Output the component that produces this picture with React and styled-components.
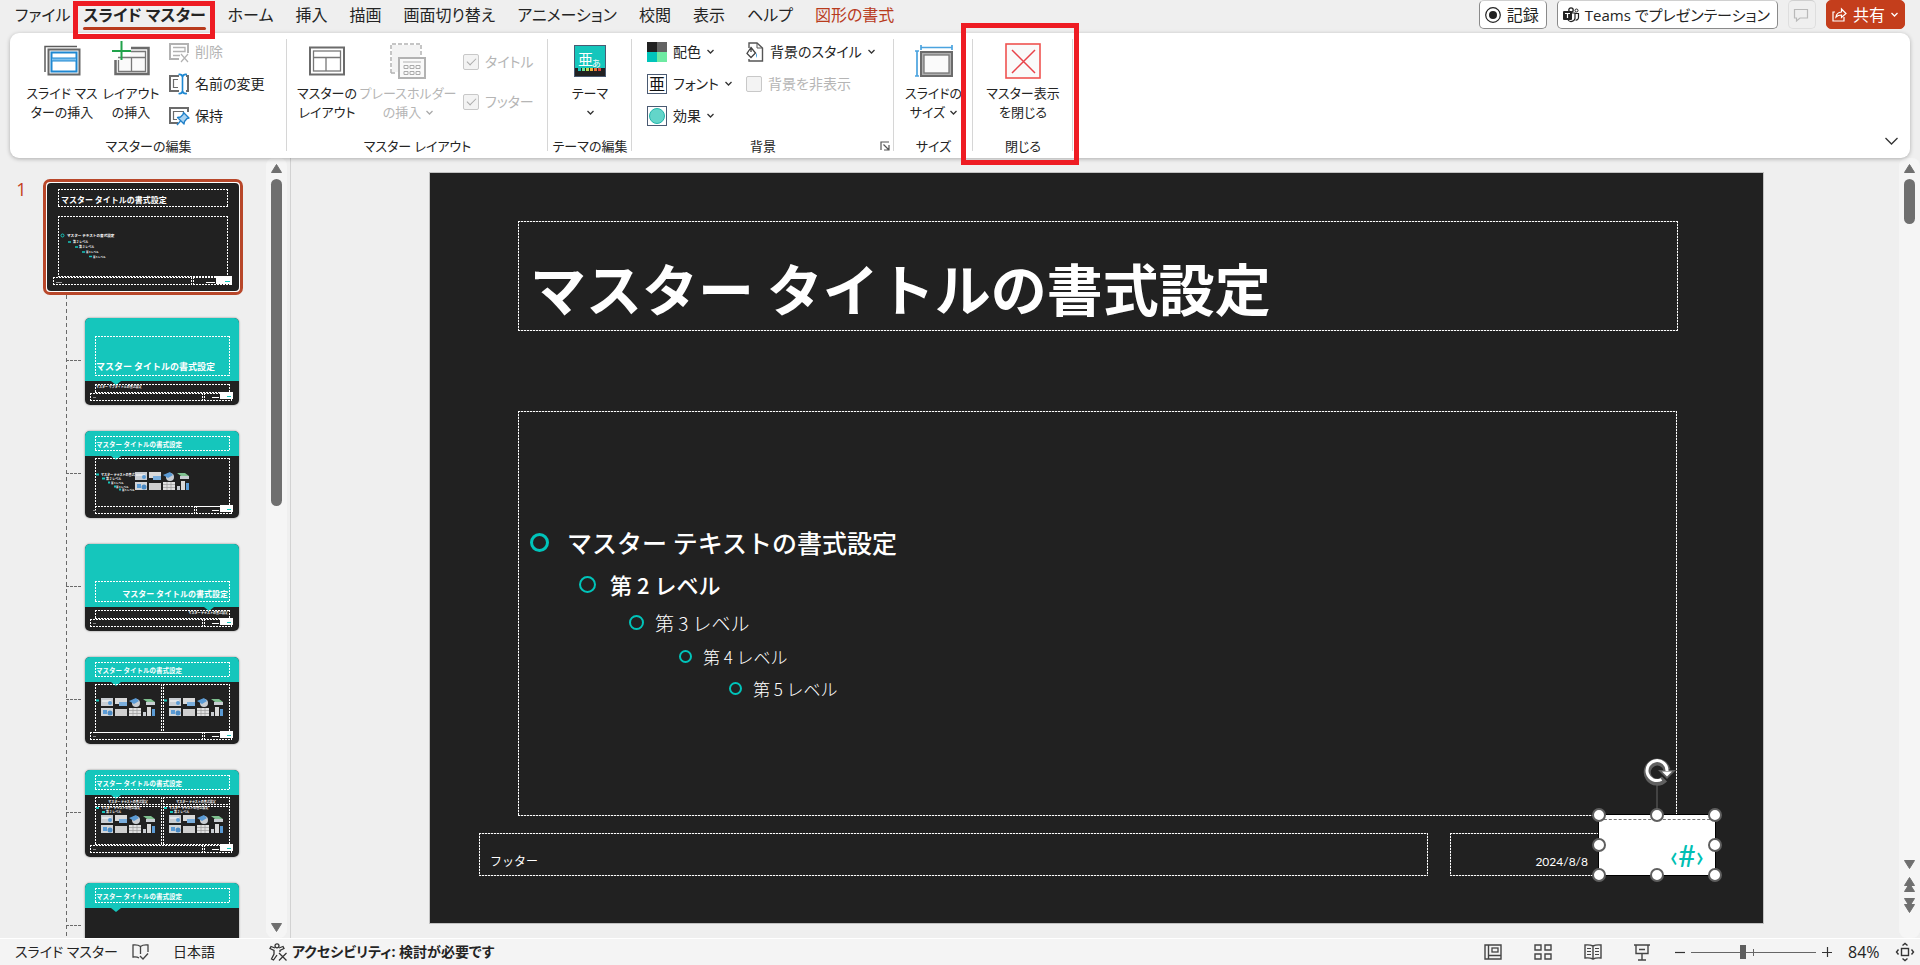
import React from "react";
import styled, { createGlobalStyle, css } from "styled-components";

const TEAL = "#15c6bc";
const DARK = "#212121";
const ACCENT = "#c43e1c";
const MARK = "#ee1c23";

const GlobalStyle = createGlobalStyle`
  * { box-sizing: border-box; }
  body {
    margin: 0;
    background: #efefef;
    color: #242424;
    font-family: "Open Sans", "Noto Sans CJK JP", sans-serif;
    font-feature-settings: "palt";
    font-size: 14px;
  }
  button, input { font: inherit; font-feature-settings: inherit; color: inherit; }
  button { background: none; border: 0; padding: 0; margin: 0; }
  ul { list-style: none; margin: 0; padding: 0; }
  svg { display: block; flex: none; overflow: visible; }
`;

const Window = styled.div`
  height: 100vh;
  display: flex;
  flex-direction: column;
  overflow: hidden;
`;

/* ---------- tab strip ---------- */

const TabBar = styled.header`
  height: 33px;
  flex: none;
  display: flex;
  align-items: flex-start;
  justify-content: space-between;
  padding: 0 15px 0 4px;
`;

const Tabs = styled.nav`
  display: flex;
`;

const Tab = styled.button`
  position: relative;
  height: 30px;
  padding: 0 11px;
  font-size: 16px;
  line-height: 30px;
  white-space: nowrap;
  color: ${(p) => (p.$accent ? "#b83b1d" : "inherit")};
  &:first-child { padding-right: 2px; }
  ${(p) =>
    p.$active &&
    css`
      font-weight: 700;
      &::before {
        content: "";
        position: absolute;
        left: 11px;
        right: 11px;
        bottom: 0;
        height: 3px;
        border-radius: 2px;
        background: #b83b1d;
      }
      &::after {
        content: "";
        position: absolute;
        z-index: 2;
        inset: 1px 2px -9px 1px;
        border: 5px solid ${MARK};
      }
    `}
`;

const Actions = styled.div`
  display: flex;
  gap: 10px;
`;

const Action = styled.button`
  height: 29px;
  display: flex;
  align-items: center;
  gap: 6px;
  padding: 0 7px 0 5px;
  border: 1px solid ${(p) => (p.$faint ? "#dedede" : "#8a8a8a")};
  border-top-color: #d0d0d0;
  border-radius: 5px;
  background: ${(p) => (p.$faint ? "transparent" : "#fff")};
  font-size: ${(p) => (p.$compact ? 15 : 16)}px;
  line-height: 26px;
  white-space: nowrap;
  ${(p) =>
    p.$primary &&
    css`
      background: ${ACCENT};
      border-color: ${ACCENT};
      color: #fff;
      padding: 0 6px 0 5px;
    `}
`;

/* ---------- ribbon ---------- */

const Ribbon = styled.section`
  position: relative;
  z-index: 1;
  height: 125px;
  flex: none;
  margin: 0 10px;
  padding-top: 6px;
  display: flex;
  background: #fff;
  border-radius: 9px;
  box-shadow: 0 1px 4px rgba(0, 0, 0, 0.28);
`;

const GroupBox = styled.div`
  position: relative;
  flex: none;
  width: ${(p) => p.$width}px;
  display: flex;
  flex-direction: column;
  &::after {
    content: "";
    position: absolute;
    right: 0;
    top: 0;
    height: 112px;
    border-right: 1px solid #d6d6d6;
  }
  ${(p) =>
    p.$marked &&
    css`
      &::before {
        content: "";
        position: absolute;
        z-index: 2;
        inset: -16px -6px -7px -12px;
        border: 5px solid ${MARK};
      }
    `}
`;

const GroupBody = styled.div`
  flex: 1;
  display: flex;
  align-items: flex-start;
  justify-content: ${(p) => (p.$center ? "center" : "flex-start")};
  padding-left: ${(p) => p.$indent || 0}px;
`;

const GroupLabel = styled.div`
  position: relative;
  height: 24px;
  line-height: 24px;
  font-size: 13px;
  text-align: center;
  white-space: nowrap;
`;

const Launcher = styled.button`
  position: absolute;
  right: 4px;
  top: 7px;
`;

const LargeButton = styled.button`
  width: ${(p) => p.$width}px;
  flex: none;
  display: flex;
  flex-direction: column;
  align-items: center;
  gap: 5px;
  padding-top: 4px;
  font-size: 13px;
  line-height: 19px;
  white-space: nowrap;
  color: ${(p) => (p.disabled ? "#b5b5b5" : "inherit")};
`;

const LabelLine = styled.span`
  display: flex;
  align-items: center;
  justify-content: center;
  gap: 5px;
  height: 19px;
`;

const SmallColumn = styled.div`
  display: flex;
  flex-direction: column;
  align-items: flex-start;
  gap: 10px;
  padding-top: 2px;
  margin-left: ${(p) => p.$gap || 0}px;
  width: ${(p) => (p.$width ? p.$width + "px" : "auto")};
`;

const SmallButton = styled.button`
  height: 22px;
  display: flex;
  align-items: center;
  gap: 6px;
  line-height: 22px;
  white-space: nowrap;
  color: ${(p) => (p.disabled ? "#b5b5b5" : "inherit")};
`;

const CheckColumn = styled.div`
  display: flex;
  flex-direction: column;
  gap: 18px;
  padding-top: 12px;
  margin-left: 5px;
`;

const CheckLabel = styled.label`
  height: 22px;
  display: flex;
  align-items: center;
  gap: 6px;
  line-height: 22px;
  white-space: nowrap;
  color: #b5b5b5;
`;

const Check = styled.input.attrs({ type: "checkbox" })`
  appearance: none;
  position: relative;
  width: 16px;
  height: 16px;
  margin: 0;
  border: 1px solid #c8c8c8;
  border-radius: 2px;
  background: #f3f3f3;
  &:checked::after {
    content: "";
    position: absolute;
    left: 3px;
    top: 3px;
    width: 8px;
    height: 4px;
    border: solid #ababab;
    border-width: 0 0 1px 1px;
    transform: rotate(-45deg);
  }
`;

const Collapse = styled.button`
  margin: 98px 12px auto auto;
`;

/* ---------- work area ---------- */

const Work = styled.main`
  flex: 1;
  min-height: 0;
  display: flex;
`;

const Panel = styled.aside`
  width: 291px;
  flex: none;
  display: flex;
  border-right: 1px solid #d2d2d2;
`;

const ThumbList = styled.div`
  flex: 1;
  overflow: hidden;
`;

const MasterRow = styled.div`
  display: flex;
  padding-top: 21px;
`;

const MasterNumber = styled.span`
  width: 43px;
  text-align: center;
  font-size: 18px;
  line-height: 20px;
  color: ${ACCENT};
`;

const MasterThumb = styled.button`
  border: 3px solid #b8472a;
  border-radius: 7px;
  padding: 1px;
  background: #fff;
  overflow: hidden;
  svg { border-radius: 4px; overflow: hidden; }
`;

const LayoutList = styled.ul`
  margin-left: 66px;
  background: repeating-linear-gradient(#6a6a6a 0 4px, transparent 4px 7px) 0 0 / 1px 100% no-repeat;
`;

const LayoutItem = styled.li`
  position: relative;
  height: 113px;
  padding: 23px 0 0 19px;
  &::before {
    content: "";
    position: absolute;
    left: 0;
    top: 65px;
    width: 15px;
    border-top: 1px dashed #6a6a6a;
  }
`;

const LayoutThumb = styled.button`
  display: block;
  border-radius: 5px;
  overflow: hidden;
  box-shadow: 0 0 2px rgba(0, 0, 0, 0.5);
  svg { overflow: hidden; }
`;

const ScrollTrack = styled.div`
  width: 21px;
  flex: none;
  display: flex;
  flex-direction: column;
  align-items: center;
  gap: 6px;
  padding-top: 6px;
  background: #f5f5f5;
  border-radius: 8px;
  margin-right: ${(p) => p.$edge || 0}px;
`;

const ScrollThumb = styled.div`
  width: 11px;
  height: ${(p) => p.$size}px;
  border-radius: 6px;
  background: #6f6f6f;
  margin-bottom: auto;
`;

const ScrollButton = styled.button`
  padding-bottom: ${(p) => (p.$end ? 6 : 0)}px;
`;

const Stage = styled.section`
  flex: 1;
  min-width: 0;
  display: flex;
  padding: 14px 135px 14px 138px;
`;

const Slide = styled.article`
  flex: 1;
  display: flex;
  flex-direction: column;
  padding: 48px 48px 47px 49px;
  background: ${DARK};
  border: 1px solid #c2c2c2;
  color: #fff;
  font-family: "Noto Sans CJK JP", sans-serif;
  font-feature-settings: normal;
`;

const dotted = css`
  --h: repeating-linear-gradient(90deg, #fff 0 2px, #555 2px 3px);
  --v: repeating-linear-gradient(#fff 0 2px, #555 2px 3px);
  background:
    var(--h) 0 0 / 100% 1px no-repeat,
    var(--h) 0 100% / 100% 1px no-repeat,
    var(--v) 0 0 / 1px 100% no-repeat,
    var(--v) 100% 0 / 1px 100% no-repeat;
`;

const TitleHolder = styled.h1`
  ${dotted}
  height: 110px;
  margin: 0 37px 80px 39px;
  padding: 0 12px 8px;
  display: flex;
  align-items: flex-end;
  font-size: 56px;
  line-height: 72px;
  font-weight: 700;
  white-space: nowrap;
`;

const BodyHolder = styled.div`
  ${dotted}
  flex: 1;
  margin: 0 38px 17px 39px;
  padding: 109px 12px 0;
`;

const LEVELS = [
  { indent: 0, size: 25, height: 44, ring: 19, gap: 18, weight: 500, text: "マスター テキストの書式設定" },
  { indent: 49, size: 22, height: 40, ring: 17, gap: 14, weight: 500, text: "第 2 レベル" },
  { indent: 99, size: 19, height: 36, ring: 15, gap: 11, weight: 300, text: "第 3 レベル" },
  { indent: 149, size: 17, height: 32, ring: 13, gap: 11, weight: 300, text: "第 4 レベル" },
  { indent: 199, size: 17, height: 32, ring: 13, gap: 11, weight: 300, text: "第 5 レベル" },
];

const Level = styled.li`
  display: flex;
  align-items: center;
  gap: ${(p) => p.$gap}px;
  height: ${(p) => p.$height}px;
  margin-left: ${(p) => p.$indent}px;
  font-size: ${(p) => p.$size}px;
  font-weight: ${(p) => p.$weight};
  white-space: nowrap;
`;

const Ring = styled.span`
  width: ${(p) => p.$size}px;
  height: ${(p) => p.$size}px;
  border: ${(p) => (p.$size > 17 ? 3 : 2)}px solid #00c4ba;
  border-radius: 50%;
`;

const FooterRow = styled.div`
  position: relative;
  height: 43px;
  display: flex;
  gap: 22px;
`;

const FooterHolder = styled.div`
  ${dotted}
  flex: 1;
  padding: 16px 11px 0;
  font-size: 12px;
  line-height: 24px;
`;

const DateHolder = styled.div`
  ${dotted}
  width: 265px;
  padding: 17px 127px 0 0;
  font-family: Lato, sans-serif;
  font-size: 12px;
  line-height: 24px;
  text-align: right;
`;

const NumberBox = styled.div`
  position: absolute;
  right: -1px;
  bottom: 0;
  width: 118px;
  height: 62px;
  background: #fff;
  border: 1px solid #000;
  color: #00bfb3;
  font-family: Lato, sans-serif;
  font-size: 30px;
  line-height: 32px;
  text-align: right;
  padding: 24px 11px 0 0;
  &::before {
    content: "";
    position: absolute;
    left: 0;
    right: 0;
    top: 4px;
    border-top: 1px dashed #777;
  }
`;

const Handle = styled.span`
  position: absolute;
  width: 14px;
  height: 14px;
  left: ${(p) => p.$x}%;
  top: ${(p) => p.$y}%;
  margin: -7px 0 0 -7px;
  border: 2px solid #5f5f5f;
  border-radius: 50%;
  background: #fff;
`;

const Rotator = styled.span`
  position: absolute;
  left: 45px;
  top: -58px;
`;

/* ---------- status bar ---------- */

const StatusBar = styled.footer`
  height: 27px;
  flex: none;
  display: flex;
  align-items: center;
  border-top: 1px solid #fff;
  background: #f4f4f4;
  padding: 0 6px 0 15px;
  line-height: 26px;
  white-space: nowrap;
`;

const StatusItem = styled.button`
  display: flex;
  align-items: center;
  gap: 5px;
  margin-right: ${(p) => p.$after || 0}px;
  font-weight: ${(p) => (p.$strong ? 700 : 400)};
`;

const StatusRight = styled.div`
  margin-left: auto;
  display: flex;
  align-items: center;
`;

const ZoomTrack = styled.label`
  position: relative;
  display: flex;
  margin: 0 6px;
  &::after {
    content: "";
    position: absolute;
    left: 62px;
    top: 4px;
    height: 7px;
    border-left: 1px solid #666;
  }
`;

const ZoomRange = styled.input.attrs({ type: "range" })`
  appearance: none;
  width: 125px;
  height: 15px;
  margin: 0;
  background: linear-gradient(#666, #666) 0 50% / 100% 1px no-repeat;
  &::-webkit-slider-thumb {
    appearance: none;
    width: 6px;
    height: 14px;
    background: #5e5e5e;
  }
`;

const ZoomValue = styled.button`
  width: 34px;
  margin: 0 14px 0 16px;
  font-size: 16px;
  text-align: left;
`;

/* ---------- icons ---------- */

const Svg = ({ w, h = w, children, ...rest }) => (
  <svg width={w} height={h} viewBox={`0 0 ${w} ${h}`} fill="none" aria-hidden="true" {...rest}>
    {children}
  </svg>
);

const Chevron = ({ w = 7, color = "#333" }) => (
  <Svg w={w} h={w / 2 + 2}>
    <path d={`M0.5 1 L${w / 2} ${w / 2 + 0.5} L${w - 0.5} 1`} stroke={color} strokeWidth="1.3" />
  </Svg>
);

const InsertMasterIcon = () => (
  <Svg w={36}>
    <path d="M1 29V3.5H33" stroke="#5c5c5c" strokeWidth="1.5" />
    <rect x="4.5" y="6.5" width="31" height="25" stroke="#666" strokeWidth="2" fill="#fafafa" />
    <rect x="7.5" y="9.5" width="25" height="19" stroke="#1e88d2" strokeWidth="2" fill="#fff" />
    <rect x="7.5" y="15" width="25" height="3" fill="#7cc0ee" stroke="#1e88d2" />
  </Svg>
);

const InsertLayoutIcon = () => (
  <Svg w={38} h={36}>
    <path d="M19 5H36.5V31H3.5V17" stroke="#6b6b6b" strokeWidth="2.5" fill="#fafafa" />
    <path d="M19 8.5H33.5V28.5H6.5V17M19 14.5H33M6 14.5H33M19.5 14.5V28" stroke="#777" strokeWidth="1.3" />
    <rect x="0" y="0" width="18" height="13" fill="#fff" />
    <path d="M9.5 -2V17M0 8H19" stroke="#21a24b" strokeWidth="2" />
  </Svg>
);

const LayoutIcon = () => (
  <Svg w={36}>
    <rect x="1" y="4.5" width="34" height="27" stroke="#6b6b6b" strokeWidth="2" fill="#fff" />
    <rect x="4.5" y="8" width="27" height="20" stroke="#777" strokeWidth="1.3" />
    <path d="M4.5 14.5H31.5M17 14.5V28" stroke="#777" strokeWidth="1.3" />
  </Svg>
);

const PlaceholderIcon = () => (
  <Svg w={36}>
    <path d="M1 30V1H31V13M1 30H7" stroke="#b2b2b2" strokeWidth="1.5" strokeDasharray="4 2" />
    <path d="M2 2H30V14H8V29H2Z" fill="#f3f3f3" />
    <rect x="9" y="15" width="26" height="20" stroke="#b2b2b2" strokeWidth="2" fill="#fafafa" />
    <path d="M13 19H31" stroke="#b2b2b2" />
    <path d="M14 22.5h4v3h-4zM20 22.5h4v3h-4zM26 22.5h4v3h-4zM14 28.5h4v3h-4zM20 28.5h4v3h-4zM26 28.5h4v3h-4z" stroke="#aaa" />
  </Svg>
);

const DeleteIcon = () => (
  <Svg w={20}>
    <path d="M10 17H1V2H19V11" stroke="#b2b2b2" strokeWidth="2" />
    <path d="M4 5.5H16V9.5H4M4 13.5H11" stroke="#b2b2b2" strokeWidth="1.3" />
    <path d="M12 12L19 20M19 12L12 20" stroke="#b2b2b2" strokeWidth="1.2" />
  </Svg>
);

const RenameIcon = () => (
  <Svg w={20}>
    <path d="M10 2H1V17H10M17 2H19V17H17" stroke="#6b6b6b" strokeWidth="2" />
    <path d="M9 5.5H4.5V13.5H9" stroke="#6b6b6b" strokeWidth="1.2" />
    <path d="M9.5 0.5Q13 0 13.5 3Q14 0 18 0.5M13.5 2V18M9.5 19.5Q13 20 13.5 17Q14 20 18 19.5" stroke="#1e88d2" strokeWidth="1.6" />
  </Svg>
);

const PreserveIcon = () => (
  <Svg w={20}>
    <path d="M9 17H1V2H19V6" stroke="#6b6b6b" strokeWidth="2" />
    <path d="M8 13.5H4.5V5.5H15" stroke="#6b6b6b" strokeWidth="1.2" />
    <path d="M14.5 6.5L20 12L18 12.5L15.5 15.5L15 18L8.5 11.5L11.5 11L14 8.5Z" stroke="#1e7fc8" strokeWidth="1.3" fill="#a9d3f2" strokeLinejoin="round" />
    <path d="M11.5 15L8 19" stroke="#1e7fc8" strokeWidth="1.4" />
  </Svg>
);

const ThemeIcon = () => (
  <Svg w={32} h={36}>
    <rect x="0.5" y="2.5" width="31" height="31" fill={TEAL} stroke="#4a5a72" />
    <path d="M1 25H31V33H1Z" fill={DARK} />
    {["#15c6bc", "#6de89a", "#b9dd55", "#f0b43c", "#e8743c", "#d8433d"].map((c, i) => (
      <rect key={c} x={4 + i * 4} y="25" width="3" height="3" fill={c} />
    ))}
    <text x="4" y="22" fontSize="15" fill="#fff" fontFamily="Noto Sans CJK JP">亜</text>
    <text x="18" y="24" fontSize="9" fill="#fff" fontFamily="Noto Sans CJK JP">あ</text>
  </Svg>
);

const ColorsIcon = () => (
  <Svg w={20}>
    <path d="M0 0H10V10H0Z" fill="#212121" />
    <path d="M10 0H20V10H10Z" fill="#636363" />
    <path d="M0 10H10V20H0Z" fill="#00c4ba" />
    <path d="M10 10H20V20H10Z" fill="#6eeaa2" />
  </Svg>
);

const FontsIcon = () => (
  <Svg w={20}>
    <rect x="0.5" y="0.5" width="19" height="19" stroke="#4a5a72" fill="#fff" />
    <text x="2" y="16" fontSize="16" fill="#111" fontFamily="Noto Sans CJK JP">亜</text>
  </Svg>
);

const EffectsIcon = () => (
  <Svg w={20}>
    <rect x="0.5" y="0.5" width="19" height="19" stroke="#4a5a72" fill="#fff" />
    <circle cx="10" cy="10" r="7.5" fill="#63d5c9" stroke="#22b5ab" />
  </Svg>
);

const BackgroundIcon = () => (
  <Svg w={18} h={20}>
    <path d="M3 6V1H11L16.5 6V19H3V17" stroke="#555" strokeWidth="1.4" />
    <path d="M11 1V6H16" stroke="#555" />
    <path d="M5 5.5L9.5 11L5 15.5L1 11.5ZM5 5.5V10" stroke="#444" strokeWidth="1.3" fill="#fff" />
    <path d="M10 11Q12 13 10 16Z" fill="#3d9be0" />
  </Svg>
);

const SlideSizeIcon = () => (
  <Svg w={38} h={36}>
    <path d="M6 4.5H37M6 2V7M37 2V7M2 8V33M0 8H4M0 33H4" stroke="#4aa3df" strokeWidth="1.7" />
    <rect x="6" y="9" width="31" height="24" stroke="#6b6b6b" strokeWidth="2" fill="#b0b0b0" />
    <rect x="9" y="12" width="25" height="18" stroke="#777" strokeWidth="1.3" fill="#fafafa" />
  </Svg>
);

const CloseIcon = () => (
  <Svg w={36}>
    <rect x="1" y="1" width="34" height="34" stroke="#ef5350" strokeWidth="1.6" fill="#fafafa" />
    <path d="M7 7L30 30M30 7L7 30" stroke="#e8434a" strokeWidth="1.5" />
  </Svg>
);

const RecordIcon = () => (
  <Svg w={16}>
    <circle cx="8" cy="8" r="7.3" stroke="#222" strokeWidth="1.2" />
    <circle cx="8" cy="8" r="4" fill="#222" />
  </Svg>
);

const TeamsIcon = () => (
  <Svg w={16}>
    <circle cx="8" cy="3" r="2.2" stroke="#222" strokeWidth="1.3" />
    <circle cx="13.5" cy="3.5" r="1.5" stroke="#222" />
    <path d="M9 6H12V11.5A4 4 0 0 1 5 13M12 6.5H15.5V10.5A2.5 2.5 0 0 1 12.5 13" stroke="#222" strokeWidth="1.2" />
    <rect x="0" y="4" width="9" height="9" rx="1" fill="#222" />
    <path d="M2 6.5H7M4.5 6.5V11" stroke="#fff" strokeWidth="1.2" />
  </Svg>
);

const CommentIcon = () => (
  <Svg w={14}>
    <path d="M0.5 1.5H13.5V10H6L2.5 13V10H0.5Z" stroke="#b9b9b9" strokeWidth="1.2" />
  </Svg>
);

const ShareIcon = () => (
  <Svg w={15}>
    <path d="M3 5H1V14H12V10" stroke="#fff" strokeWidth="1.2" />
    <path d="M4 10Q4.5 5.5 9.5 5V2L14 6.5L9.5 10.5V8Q6 8 4 10Z" stroke="#fff" strokeWidth="1.2" />
  </Svg>
);

const LauncherIcon = () => (
  <Svg w={10}>
    <path d="M1 9V1H9M3.5 3.5L9 9M9 4V9H4" stroke="#555" strokeWidth="1.2" />
  </Svg>
);

const Triangle = ({ down, double: twice }) => {
  const one = down ? "M0.5 0.5H10.5L5.5 8.5Z" : "M0.5 8.5H10.5L5.5 0.5Z";
  return (
    <Svg w={11} h={twice ? 15 : 9}>
      <path d={one} fill="#6f6f6f" stroke="#6f6f6f" strokeLinejoin="round" />
      {twice && <path d={one} fill="#6f6f6f" stroke="#6f6f6f" strokeLinejoin="round" transform="translate(0 6)" />}
    </Svg>
  );
};

const RotateIcon = () => (
  <Svg w={30} h={52}>
    <path d="M13 27V52" stroke="#666" />
    <path d="M20.5 22A10 10 0 1 1 23 13" stroke="#606060" strokeWidth="7" />
    <path d="M14 13H32L23 22Z" fill="#606060" />
    <path d="M17.5 22.5A10 10 0 1 1 23 14" stroke="#fff" strokeWidth="3" />
    <path d="M18 14.5H28L23 19.5Z" fill="#fff" />
  </Svg>
);

const ProofIcon = () => (
  <Svg w={17} h={16}>
    <path d="M8.5 2.5Q6 0.5 1 1V13Q5 12.5 7 14M8.5 2.5Q11 0.5 16 1V8M8.5 2.5V10M8 12L11 15L16 9.5" stroke="#444" strokeWidth="1.3" />
  </Svg>
);

const AccessibilityIcon = () => (
  <Svg w={18}>
    <circle cx="8" cy="2.8" r="2" stroke="#333" strokeWidth="1.3" />
    <path d="M6 5L2 3.5L1 5.5L5 7.5V11L2.5 16L4.5 17L8 12M10 5L14 3.5L15 5.5L11 7.5V9" stroke="#333" strokeWidth="1.3" />
    <path d="M10 10L17.5 17.5M17.5 10L10 17.5" stroke="#333" strokeWidth="1.3" />
  </Svg>
);

const NormalViewIcon = () => (
  <Svg w={18} h={16}>
    <path d="M1 1H17V15H1ZM4.5 1V15M4.5 11.5H17" stroke="#444" strokeWidth="1.4" />
    <rect x="8" y="4" width="6" height="4" stroke="#444" strokeWidth="1.3" />
  </Svg>
);

const SorterIcon = () => (
  <Svg w={18} h={16}>
    <path d="M1 1H7V6H1ZM11 1H17V6H11ZM1 10H7V15H1ZM11 10H17V15H11Z" stroke="#444" strokeWidth="1.4" />
  </Svg>
);

const ReadingIcon = () => (
  <Svg w={18} h={16}>
    <path d="M9 2Q6 0.5 1 1V14Q6 13.5 9 15Q12 13.5 17 14V1Q12 0.5 9 2V15" stroke="#444" strokeWidth="1.4" />
    <path d="M3 4.5H7M3 7.5H7M3 10.5H7M11 4.5H15M11 7.5H15M11 10.5H15" stroke="#444" strokeWidth="1.2" />
  </Svg>
);

const ShowIcon = () => (
  <Svg w={16} h={17}>
    <path d="M0 1H16M2 1V9.5H14V1M5 5.5H11M8 9.5V16M4 16H12" stroke="#444" strokeWidth="1.4" />
  </Svg>
);

const FitIcon = () => (
  <Svg w={18}>
    <rect x="5.5" y="5.5" width="7" height="7" stroke="#333" strokeWidth="1.4" />
    <path d="M6.5 2.5L9 0.5L11.5 2.5M6.5 15.5L9 17.5L11.5 15.5M2.5 6.5L0.5 9L2.5 11.5M15.5 6.5L17.5 9L15.5 11.5" stroke="#333" strokeWidth="1.4" />
  </Svg>
);

const Sign = ({ plus }) => (
  <Svg w={10}>
    <path d={plus ? "M0 5.5H10M5.5 0V10" : "M0 5.5H10"} stroke="#333" strokeWidth="1.2" />
  </Svg>
);

/* ---------- slide miniatures ---------- */

const Dash = ({ x, y, w, h }) => (
  <path
    d={`M${x} ${y + 0.5}H${x + w + 1}M${x} ${y + h + 0.5}H${x + w + 1}M${x + 0.5} ${y}V${y + h + 1}M${x + w + 0.5} ${y}V${y + h + 1}`}
    stroke="#fff"
    strokeDasharray="2 1"
  />
);

const Words = ({ x, y, size, bold = true, anchor, children, fill = "#fff" }) => (
  <text x={x} y={y} fontSize={size} fontWeight={bold ? 700 : 400} textAnchor={anchor} fill={fill} fontFamily="Noto Sans CJK JP" style={{ fontFeatureSettings: "normal" }}>
    {children}
  </text>
);

const MiniFooter = ({ inset = 5, split = 117 }) => (
  <g>
    <Dash x={inset} y={75} w={split - inset} h={7} />
    <Dash x={split + 2} y={75} w={144 - split} h={7} />
    <rect x="135" y="74" width="13" height="7" fill="#fff" />
    <path d="M8 79.5H11" stroke="#888" />
    <path d="M127 79.5H134" stroke="#fff" />
    <path d="M142 78.5H146" stroke={TEAL} />
  </g>
);

const MiniIcons = ({ x, y }) => (
  <g transform={`translate(${x} ${y})`}>
    <rect width="12" height="8" fill="#c9cdd2" />
    <path d="M1 3H10" stroke="#fff" />
    <circle cx="9" cy="5" r="2" fill="#5b9bd5" />
    <rect x="14" width="12" height="6" fill="#d9d9d9" />
    <rect x="18" y="4" width="8" height="4" fill="#7aaedd" />
    <circle cx="35" cy="5" r="4" fill="#c9cdd2" />
    <path d="M28 3L35 0L38 3L33 6Z" fill="#5b9bd5" />
    <path d="M42 1H50L54 4H46Z" fill="#7fc08f" />
    <rect x="45" y="4" width="9" height="3" fill="#c9cdd2" />
    <rect y="10" width="12" height="8" fill="#d0d4d8" />
    <rect x="2" y="12" width="4" height="4" fill="#5b9bd5" />
    <circle cx="9" cy="15" r="2.5" fill="#4a8ac4" />
    <rect x="14" y="11" width="12" height="7" fill="#cfcfcf" />
    <rect x="28" y="10" width="12" height="8" fill="#e0e0e0" />
    <path d="M28 12.5H40M28 15.5H40M32 10V18M36 10V18" stroke="#999" strokeWidth="0.7" />
    <rect x="42" y="14" width="3" height="4" fill="#c9cdd2" />
    <rect x="46" y="9" width="4" height="9" fill="#d9d9d9" />
    <rect x="51" y="11" width="3" height="7" fill="#5b9bd5" />
  </g>
);

const TITLE = "マスター タイトルの書式設定";

const MiniLayout = ({ kind }) => {
  const tall = kind === "title" || kind === "section";
  const edge = tall ? 63 : 25;
  const notch = kind === "section" ? 124 : 31;
  return (
    <Svg w={154} h={87}>
      <rect width="154" height="87" fill={DARK} />
      <rect width="154" height={edge} fill={TEAL} />
      <path d={`M${notch - 5} ${edge}h10l-5 4z`} fill={TEAL} />
      {kind === "title" && (
        <g>
          <Dash x={10} y={18} w={134} h={39} />
          <Words x={11} y={52} size={9}>{TITLE}</Words>
          <Dash x={10} y={66} w={134} h={8} />
          <Words x={11} y={70} size={3}>マスター サブタイトルの書式設定</Words>
        </g>
      )}
      {kind === "section" && (
        <g>
          <Dash x={10} y={37} w={134} h={20} />
          <Words x={143} y={53} size={8} anchor="end">{TITLE}</Words>
          <Dash x={10} y={66} w={134} h={8} />
          <Words x={143} y={70} size={3} anchor="end">マスター テキストの書式設定</Words>
        </g>
      )}
      {!tall && (
        <g>
          <Dash x={10} y={5} w={134} h={14} />
          <Words x={11} y={16} size={6.5}>{TITLE}</Words>
        </g>
      )}
      {kind === "content" && (
        <g>
          <Dash x={10} y={27} w={134} h={48} />
          <path d="M11 43.5H14M17 47.5H20M23 51.5H25M29 55.5H31M34 58.5H36" stroke={TEAL} strokeWidth="2" />
          <Words x={16} y={45} size={3}>マスター テキストの書式設定</Words>
          <Words x={21} y={49} size={3}>第 2 レベル</Words>
          <Words x={26} y={53} size={2.5}>第 3 レベル</Words>
          <Words x={31} y={57} size={2.5}>第 4 レベル</Words>
          <Words x={37} y={60} size={2.5}>第 5 レベル</Words>
          <MiniIcons x={50} y={41} />
        </g>
      )}
      {kind === "two" &&
        [0, 68].map((dx) => (
          <g key={dx}>
            <Dash x={10 + dx} y={27} w={66} h={48} />
            <path d={`M${11 + dx} 43.5H${14 + dx}`} stroke={TEAL} strokeWidth="2" />
            <MiniIcons x={16 + dx} y={41} />
          </g>
        ))}
      {kind === "compare" &&
        [0, 68].map((dx) => (
          <g key={dx}>
            <Dash x={10 + dx} y={27} w={66} h={7} />
            <Dash x={10 + dx} y={36} w={66} h={38} />
            <Words x={43 + dx} y={33} size={3} anchor="middle">マスター テキストの書式設定</Words>
            <path d={`M${11 + dx} 38H${14 + dx}M${17 + dx} 42H${20 + dx}`} stroke={TEAL} strokeWidth="2" />
            <Words x={16 + dx} y={39} size={3}>マスター テキストの書式設定</Words>
            <Words x={21 + dx} y={43} size={3}>第 2 レベル</Words>
            <MiniIcons x={16 + dx} y={45} />
          </g>
        ))}
      {kind !== "only" && (kind === "content" ? <MiniFooter inset={10} split={109} /> : <MiniFooter />)}
    </Svg>
  );
};

const MiniMaster = () => (
  <Svg w={192} h={108}>
    <rect width="192" height="108" fill={DARK} />
    <Dash x={11} y={6} w={169} h={17} />
    <Words x={14} y={20} size={8}>{TITLE}</Words>
    <Dash x={11} y={33} w={169} h={60} />
    <circle cx="15.5" cy="52.5" r="1.5" stroke={TEAL} />
    <path d="M21 59H24M28 64H31M35 69H38M42 73.5H45" stroke={TEAL} strokeWidth="1.5" />
    <Words x={20} y={54} size={3.6}>マスター テキストの書式設定</Words>
    <Words x={26} y={60} size={3}>第 2 レベル</Words>
    <Words x={32} y={65} size={3}>第 3 レベル</Words>
    <Words x={39} y={70} size={2.5}>第 4 レベル</Words>
    <Words x={46} y={74.5} size={2.5}>第 5 レベル</Words>
    <Dash x={6} y={94} w={138} h={7} />
    <Dash x={146} y={94} w={38} h={7} />
    <path d="M9 99.5H15" stroke="#999" />
    <path d="M159 99.5H168" stroke="#fff" />
    <rect x="169" y="93" width="16" height="8" fill="#fff" />
    <path d="M178 98.5H183" stroke={TEAL} />
  </Svg>
);

/* ---------- composition ---------- */

const Group = ({ label, width, indent, center, marked, launcher, children }) => (
  <GroupBox $width={width} $marked={marked} role="group" aria-label={label}>
    <GroupBody $indent={indent} $center={center}>{children}</GroupBody>
    <GroupLabel>
      {label}
      {launcher && <Launcher aria-label="背景の書式設定"><LauncherIcon /></Launcher>}
    </GroupLabel>
  </GroupBox>
);

const Large = ({ icon, lines, chevron, width, disabled }) => (
  <LargeButton $width={width} disabled={disabled}>
    {icon}
    <span>
      {lines.map((line, i) => (
        <LabelLine key={i}>
          {line}
          {chevron && i === lines.length - 1 && <Chevron color={disabled ? "#aaa" : undefined} />}
        </LabelLine>
      ))}
    </span>
  </LargeButton>
);

const Small = ({ icon, text, chevron, disabled }) => (
  <SmallButton disabled={disabled}>
    {icon}
    {text}
    {chevron && <Chevron />}
  </SmallButton>
);

const Scroll = ({ size, edge, children }) => (
  <ScrollTrack $edge={edge}>
    <ScrollButton aria-label="上へ"><Triangle /></ScrollButton>
    <ScrollThumb $size={size} />
    <ScrollButton $end={!children} aria-label="下へ"><Triangle down /></ScrollButton>
    {children}
  </ScrollTrack>
);

const PagerButtons = styled.div`
  display: flex;
  flex-direction: column;
  gap: 6px;
  padding: 2px 0 25px;
`;

const TABS = [
  ["ファイル"], ["スライド マスター", "active"], ["ホーム"], ["挿入"], ["描画"], ["画面切り替え"],
  ["アニメーション"], ["校閲"], ["表示"], ["ヘルプ"], ["図形の書式", "accent"],
];

const HANDLES = [[0, 0], [50, 0], [100, 0], [0, 50], [100, 50], [0, 100], [50, 100], [100, 100]];

export default function App() {
  return (
    <Window lang="ja">
      <GlobalStyle />
      <TabBar>
        <Tabs>
          {TABS.map(([name, state]) => (
            <Tab key={name} $active={state === "active"} $accent={state === "accent"}>{name}</Tab>
          ))}
        </Tabs>
        <Actions>
          <Action><RecordIcon />記録</Action>
          <Action $compact><TeamsIcon />Teams でプレゼンテーション</Action>
          <Action $faint disabled aria-label="コメント"><CommentIcon /></Action>
          <Action $primary><ShareIcon />共有<Chevron color="#fff" /></Action>
        </Actions>
      </TabBar>

      <Ribbon>
        <Group label="マスターの編集" width={277} indent={16}>
          <Large width={72} icon={<InsertMasterIcon />} lines={["スライド マス", "ターの挿入"]} />
          <Large width={66} icon={<InsertLayoutIcon />} lines={["レイアウト", "の挿入"]} />
          <SmallColumn $gap={5}>
            <Small icon={<DeleteIcon />} text="削除" disabled />
            <Small icon={<RenameIcon />} text="名前の変更" />
            <Small icon={<PreserveIcon />} text="保持" />
          </SmallColumn>
        </Group>
        <Group label="マスター レイアウト" width={261} indent={9}>
          <Large width={62} icon={<LayoutIcon />} lines={["マスターの", "レイアウト"]} />
          <Large width={100} icon={<PlaceholderIcon />} lines={["プレースホルダー", "の挿入"]} chevron disabled />
          <CheckColumn>
            <CheckLabel><Check defaultChecked disabled />タイトル</CheckLabel>
            <CheckLabel><Check defaultChecked disabled />フッター</CheckLabel>
          </CheckColumn>
        </Group>
        <Group label="テーマの編集" width={84} center>
          <Large width={60} icon={<ThemeIcon />} lines={["テーマ", ""]} chevron />
        </Group>
        <Group label="背景" width={262} indent={15} launcher>
          <SmallColumn $width={99}>
            <Small icon={<ColorsIcon />} text="配色" chevron />
            <Small icon={<FontsIcon />} text="フォント" chevron />
            <Small icon={<EffectsIcon />} text="効果" chevron />
          </SmallColumn>
          <SmallColumn>
            <Small icon={<BackgroundIcon />} text="背景のスタイル" chevron />
            <CheckLabel><Check disabled />背景を非表示</CheckLabel>
          </SmallColumn>
        </Group>
        <Group label="サイズ" width={79} center>
          <Large width={60} icon={<SlideSizeIcon />} lines={["スライドの", "サイズ"]} chevron />
        </Group>
        <Group label="閉じる" width={100} center marked>
          <Large width={80} icon={<CloseIcon />} lines={["マスター表示", "を閉じる"]} />
        </Group>
        <Collapse aria-label="リボンを折りたたむ"><Chevron w={13} /></Collapse>
      </Ribbon>

      <Work>
        <Panel>
          <ThumbList>
            <MasterRow>
              <MasterNumber>1</MasterNumber>
              <MasterThumb aria-label="スライド マスター"><MiniMaster /></MasterThumb>
            </MasterRow>
            <LayoutList>
              {["title", "content", "section", "two", "compare", "only"].map((kind) => (
                <LayoutItem key={kind}>
                  <LayoutThumb aria-label="レイアウト"><MiniLayout kind={kind} /></LayoutThumb>
                </LayoutItem>
              ))}
            </LayoutList>
          </ThumbList>
          <Scroll size={327} edge={3} />
        </Panel>

        <Stage>
          <Slide>
            <TitleHolder>{TITLE}</TitleHolder>
            <BodyHolder>
              <ul>
                {LEVELS.map((l) => (
                  <Level key={l.text} $indent={l.indent} $size={l.size} $height={l.height} $gap={l.gap} $weight={l.weight}>
                    <Ring $size={l.ring} />
                    {l.text}
                  </Level>
                ))}
              </ul>
            </BodyHolder>
            <FooterRow>
              <FooterHolder>フッター</FooterHolder>
              <DateHolder>2024/8/8</DateHolder>
              <NumberBox>
                ‹#›
                {HANDLES.map(([x, y]) => <Handle key={`${x}-${y}`} $x={x} $y={y} />)}
                <Rotator><RotateIcon /></Rotator>
              </NumberBox>
            </FooterRow>
          </Slide>
        </Stage>

        <Scroll size={45}>
          <PagerButtons>
            <ScrollButton aria-label="前のスライド"><Triangle double /></ScrollButton>
            <ScrollButton aria-label="次のスライド"><Triangle down double /></ScrollButton>
          </PagerButtons>
        </Scroll>
      </Work>

      <StatusBar>
        <StatusItem $after={14}>スライド マスター</StatusItem>
        <StatusItem $after={24} aria-label="スペル チェック"><ProofIcon /></StatusItem>
        <StatusItem $after={54}>日本語</StatusItem>
        <StatusItem $strong><AccessibilityIcon />アクセシビリティ: 検討が必要です</StatusItem>
        <StatusRight>
          <StatusItem $after={32} aria-label="標準"><NormalViewIcon /></StatusItem>
          <StatusItem $after={32} aria-label="スライド一覧"><SorterIcon /></StatusItem>
          <StatusItem $after={32} aria-label="閲覧表示"><ReadingIcon /></StatusItem>
          <StatusItem $after={25} aria-label="スライド ショー"><ShowIcon /></StatusItem>
          <StatusItem aria-label="縮小"><Sign /></StatusItem>
          <ZoomTrack><ZoomRange defaultValue={41} aria-label="ズーム" /></ZoomTrack>
          <StatusItem aria-label="拡大"><Sign plus /></StatusItem>
          <ZoomValue>84%</ZoomValue>
          <StatusItem aria-label="ウィンドウに合わせる"><FitIcon /></StatusItem>
        </StatusRight>
      </StatusBar>
    </Window>
  );
}
